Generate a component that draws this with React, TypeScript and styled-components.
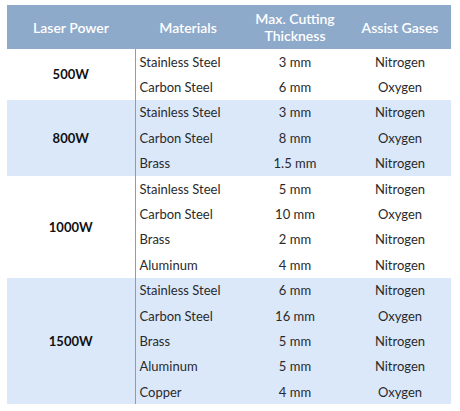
import React from "react";
import styled, { createGlobalStyle } from "styled-components";

const GlobalStyle = createGlobalStyle`
  html, body {
    margin: 0;
    padding: 0;
    background: #fff;
  }
  body {
    font-family: Lato, "Noto Sans", sans-serif;
  }
  th, td {
    box-sizing: border-box;
  }
`;

const Page = styled.div`
  padding: 5px 9px 0 7px;
`;

const Table = styled.table`
  width: 444px;
  border-collapse: collapse;
  table-layout: fixed;
  font-size: 13px;
  color: #2a2a2a;
`;

const HeadCell = styled.th<{ $w: number }>`
  width: ${({ $w }) => $w}px;
  height: 44px;
  padding: 0 2px;
  background: #8eaacb;
  color: #fff;
  font-weight: 600;
  font-size: 14px;
  line-height: 17px;
  text-align: center;
`;

const Row = styled.tr<{ $shade: boolean }>`
  height: 25.4px;
  background: ${({ $shade }) => ($shade ? "#dbe8fa" : "#fff")};
`;

const PowerCell = styled.td`
  text-align: center;
  font-weight: 700;
  color: #111;
  border-right: 1px solid #9a9a9a;
`;

const MaterialCell = styled.td`
  padding: 0 4px;
  text-align: left;
`;

const CenterCell = styled.td`
  text-align: center;
`;

type Entry = [string, string, string];

const groups: { power: string; items: Entry[] }[] = [
  {
    power: "500W",
    items: [
      ["Stainless Steel", "3 mm", "Nitrogen"],
      ["Carbon Steel", "6 mm", "Oxygen"],
    ],
  },
  {
    power: "800W",
    items: [
      ["Stainless Steel", "3 mm", "Nitrogen"],
      ["Carbon Steel", "8 mm", "Oxygen"],
      ["Brass", "1.5 mm", "Nitrogen"],
    ],
  },
  {
    power: "1000W",
    items: [
      ["Stainless Steel", "5 mm", "Nitrogen"],
      ["Carbon Steel", "10 mm", "Oxygen"],
      ["Brass", "2 mm", "Nitrogen"],
      ["Aluminum", "4 mm", "Nitrogen"],
    ],
  },
  {
    power: "1500W",
    items: [
      ["Stainless Steel", "6 mm", "Nitrogen"],
      ["Carbon Steel", "16 mm", "Oxygen"],
      ["Brass", "5 mm", "Nitrogen"],
      ["Aluminum", "5 mm", "Nitrogen"],
      ["Copper", "4 mm", "Oxygen"],
    ],
  },
];

const App: React.FC = () => (
  <>
    <GlobalStyle />
    <Page>
      <Table>
        <thead>
          <tr>
            <HeadCell $w={128}>Laser Power</HeadCell>
            <HeadCell $w={106}>Materials</HeadCell>
            <HeadCell $w={108}>
              Max. Cutting
              <br />
              Thickness
            </HeadCell>
            <HeadCell $w={102}>Assist Gases</HeadCell>
          </tr>
        </thead>
        <tbody>
          {groups.map((g, gi) =>
            g.items.map((item, i) => (
              <Row key={`${g.power}-${i}`} $shade={gi % 2 === 1}>
                {i === 0 && <PowerCell rowSpan={g.items.length}>{g.power}</PowerCell>}
                <MaterialCell>{item[0]}</MaterialCell>
                <CenterCell>{item[1]}</CenterCell>
                <CenterCell>{item[2]}</CenterCell>
              </Row>
            ))
          )}
        </tbody>
      </Table>
    </Page>
  </>
);

export default App;
